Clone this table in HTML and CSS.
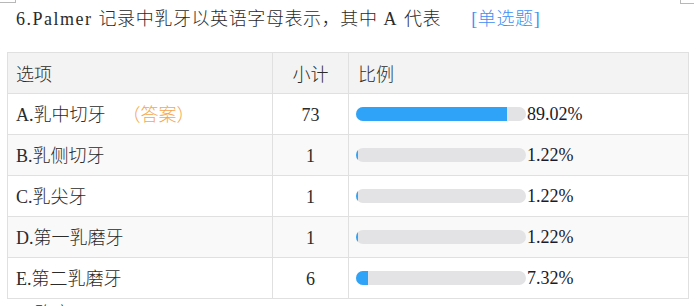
FILE: index.html
```html
<!DOCTYPE html>
<html lang="zh-CN">
<head>
<meta charset="utf-8">
<title>单选题统计</title>
<link rel="stylesheet" href="styles.css">
</head>
<body>
<div class="page">
  <span class="mark mark-tl"></span>
  <span class="mark mark-tr"></span>
  <div class="title"><span class="lat wide">6.Palmer&nbsp;</span>记录中乳牙以英语字母表示，其中<span class="lat wide">&nbsp;A&nbsp;</span>代表<span class="tag"><span class="lat">[</span>单选题<span class="lat">]</span></span></div>
  <table class="stats">
    <colgroup>
      <col class="c-opt">
      <col class="c-cnt">
      <col class="c-ratio">
    </colgroup>
    <thead>
      <tr><th class="opt">选项</th><th class="cnt">小计</th><th class="ratio-h">比例</th></tr>
    </thead>
    <tbody>
      <tr>
        <td class="opt"><span class="lat">A.</span>乳中切牙<span class="answer">（答案）</span></td>
        <td class="cnt"><span class="lat">73</span></td>
        <td class="ratio"><div class="ratio-wrap"><span class="bar"><span class="fill" style="width:89.02%"></span></span><span class="lat pct">89.02%</span></div></td>
      </tr>
      <tr class="alt">
        <td class="opt"><span class="lat">B.</span>乳侧切牙</td>
        <td class="cnt"><span class="lat">1</span></td>
        <td class="ratio"><div class="ratio-wrap"><span class="bar"><span class="fill" style="width:1.22%"></span></span><span class="lat pct">1.22%</span></div></td>
      </tr>
      <tr>
        <td class="opt"><span class="lat">C.</span>乳尖牙</td>
        <td class="cnt"><span class="lat">1</span></td>
        <td class="ratio"><div class="ratio-wrap"><span class="bar"><span class="fill" style="width:1.22%"></span></span><span class="lat pct">1.22%</span></div></td>
      </tr>
      <tr class="alt">
        <td class="opt"><span class="lat">D.</span>第一乳磨牙</td>
        <td class="cnt"><span class="lat">1</span></td>
        <td class="ratio"><div class="ratio-wrap"><span class="bar"><span class="fill" style="width:1.22%"></span></span><span class="lat pct">1.22%</span></div></td>
      </tr>
      <tr>
        <td class="opt"><span class="lat">E.</span>第二乳磨牙</td>
        <td class="cnt"><span class="lat">6</span></td>
        <td class="ratio"><div class="ratio-wrap"><span class="bar"><span class="fill" style="width:7.32%"></span></span><span class="lat pct">7.32%</span></div></td>
      </tr>
    </tbody>
  </table>
  <div class="accuracy">正确率：<span class="acc-val lat">89.02%</span></div>
</div>
</body>
</html>
```
FILE: styles.css
```css
html, body {
  margin: 0;
  padding: 0;
  background: #ffffff;
}

body {
  font-family: "Noto Sans CJK SC", "Noto Sans", sans-serif;
  font-size: 18px;
  font-weight: 300;
  color: #2b2b2b;
  overflow: hidden;
}

.page {
  position: relative;
  width: 694px;
  height: 306px;
  overflow: hidden;
}

.lat {
  font-family: "Liberation Serif", "Noto Sans CJK SC", serif;
  font-size: 18px;
  font-weight: normal;
}

.wide {
  letter-spacing: 1.5px;
}

.mark {
  position: absolute;
  top: 0;
  border-color: #b8b8b8;
  border-style: solid;
  border-width: 0;
}

.mark-tl {
  left: 0;
  width: 15px;
  height: 2px;
  border-bottom-width: 1px;
  border-right-width: 1px;
}

.mark-tr {
  left: 680px;
  width: 14px;
  height: 3px;
  border-bottom-width: 1px;
  border-left-width: 1px;
}

.title {
  height: 34px;
  line-height: 34px;
  padding-left: 16px;
  white-space: nowrap;
  letter-spacing: 0.6px;
}

.tag {
  margin-left: 30px;
  color: #3d8ff2;
}

.stats {
  margin: 18px 0 0 7px;
  width: 681px;
  border-collapse: collapse;
  table-layout: fixed;
}

.c-opt { width: 265px; }
.c-cnt { width: 76px; }
.c-ratio { width: 340px; }

.stats th,
.stats td {
  border: 1px solid #e0e0e0;
  height: 40px;
  padding: 0;
  font-weight: 300;
  line-height: 24px;
  white-space: nowrap;
}

.stats thead tr {
  background: #f3f3f3;
}

.stats tr.alt {
  background: #f9f9f9;
}

.opt {
  text-align: left;
  padding-left: 8px !important;
}

.cnt {
  text-align: center;
}

.ratio-h {
  text-align: left;
  padding-left: 9px !important;
}

.ratio {
  padding-left: 7px !important;
}

.answer {
  margin-left: 17px;
  color: #f5a74f;
}

.ratio-wrap {
  display: flex;
  align-items: center;
}

.bar {
  display: block;
  width: 170px;
  height: 14px;
  border-radius: 7px;
  background: #e3e3e5;
  overflow: hidden;
}

.fill {
  display: block;
  height: 100%;
  background: #2ea3f7;
}

.pct {
  margin-left: 1px;
  color: #1a1a2a;
}

.accuracy {
  padding-left: 17px;
  line-height: 26px;
}

.acc-val {
  margin-left: 2px;
  color: #ff7b36;
}
```
